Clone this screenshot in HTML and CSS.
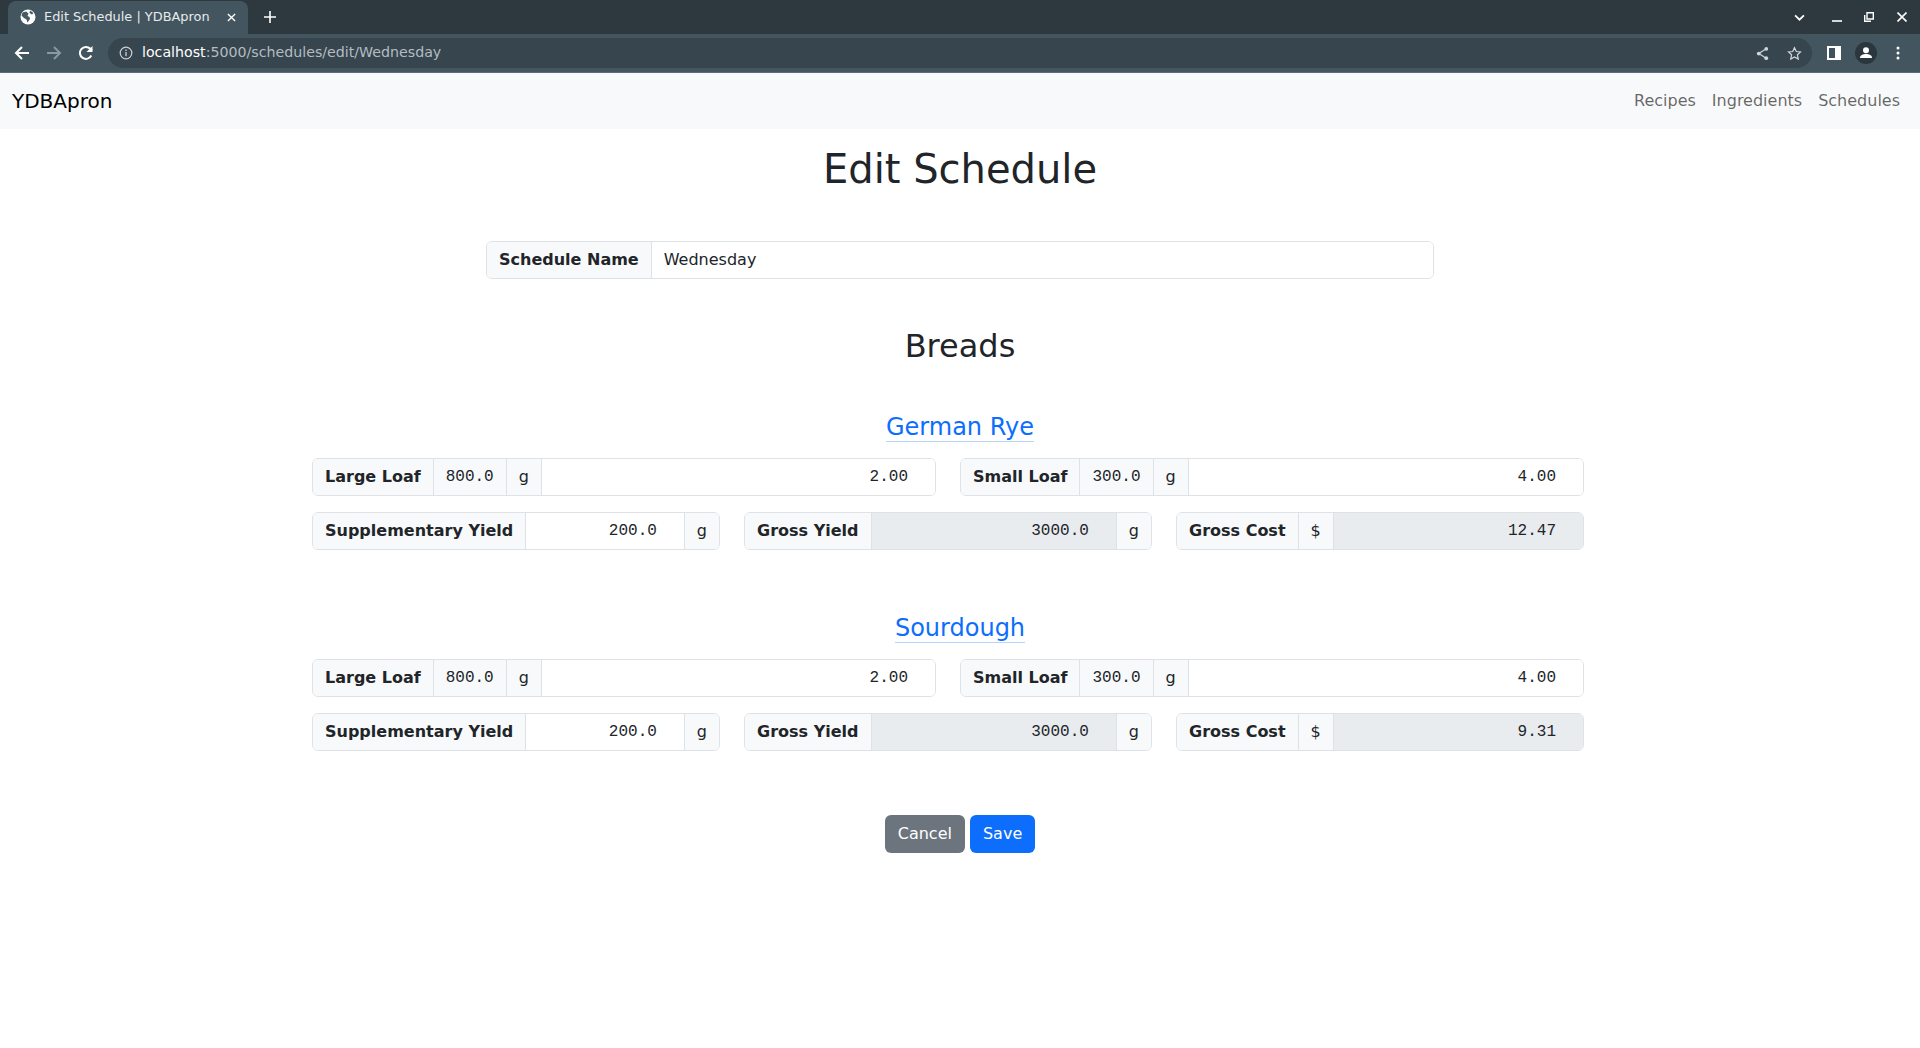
FILE: index.html
```html
<!DOCTYPE html>
<html lang="en">
<head>
  <meta charset="UTF-8">
  <title>Edit Schedule | YDBApron</title>
  <link rel="stylesheet" href="styles.css">
</head>
<body>

<!-- browser chrome -->
<div class="tabstrip">
  <div class="tab">
    <svg class="favicon" viewBox="0 0 16 16"><circle cx="8" cy="8" r="7.500" fill="#fff"/><path d="M2.500 3.500L6 2.500l2.500 2-1 2.500 2 1 .5 2-2.500 3.500-1-3-2.500-1.500-2.500-2.500zM10 1.500l3.500 2.500-1.500 1.500-2.500-1.500z" fill="#455a66"/></svg>
    <span class="tab-title">Edit Schedule | YDBApron</span>
    <svg class="tab-close" viewBox="0 0 10 10"><path d="M1 1l8 8M9 1l-8 8" stroke="#fff" stroke-width="1.500"/></svg>
  </div>
  <svg class="new-tab" viewBox="0 0 12 12"><path d="M6 0v12M0 6h12" stroke="#fff" stroke-width="1.600"/></svg>
  <div class="window-btns">
    <svg class="win-chevron" viewBox="0 0 10 6"><path d="M1 1l4 4 4-4" fill="none" stroke="#fff" stroke-width="1.600"/></svg>
    <svg class="win-icon" viewBox="0 0 10 10"><path d="M0 9h10" stroke="#fff" stroke-width="1.600"/></svg>
    <svg class="win-icon" viewBox="0 0 10 10"><path d="M3 .7h6.300v6.300H3z" fill="none" stroke="#fff" stroke-width="1.400"/><path d="M.7 3v6.300H7" fill="none" stroke="#fff" stroke-width="1.400"/></svg>
    <svg class="win-icon" viewBox="0 0 10 10"><path d="M.5.5l9 9M9.500.5l-9 9" stroke="#fff" stroke-width="1.600"/></svg>
  </div>
</div>
<div class="toolbar">
  <svg class="tool-icon" viewBox="0 0 16 16"><path d="M15 8H2M8 2L2 8l6 6" fill="none" stroke="#fff" stroke-width="2"/></svg>
  <svg class="tool-icon" viewBox="0 0 16 16"><path d="M1 8h13M8 2l6 6-6 6" fill="none" stroke="#8b989f" stroke-width="2"/></svg>
  <svg class="tool-icon" viewBox="0 0 16 16"><path d="M13.300 10.500A6 6 0 1 1 12.300 3.800L14 5.500" fill="none" stroke="#fff" stroke-width="2"/><path d="M14.500 1v6h-6z" fill="#fff"/></svg>
  <div class="omnibox">
    <svg class="info-icon" viewBox="0 0 14 14"><circle cx="7" cy="7" r="5.800" fill="none" stroke="#ccd2d6" stroke-width="1.200"/><path d="M7 6v4.200M7 3.600v1.400" stroke="#ccd2d6" stroke-width="1.300"/></svg>
    <span class="url"><span class="url-host">localhost</span>:5000/schedules/edit/Wednesday</span>
    <svg class="omni-icon" viewBox="0 0 16 16"><path d="M12 3L4 8l8 5" fill="none" stroke="#cfd5d9" stroke-width="1.300"/><circle cx="12" cy="3" r="2" fill="#cfd5d9"/><circle cx="4" cy="8" r="2" fill="#cfd5d9"/><circle cx="12" cy="13" r="2" fill="#cfd5d9"/></svg>
    <svg class="omni-icon" viewBox="0 0 16 16"><path d="M8 1.800l1.900 4.100 4.500.5-3.300 3 .9 4.500L8 11.700l-4 2.200.9-4.500-3.300-3 4.500-.5z" fill="none" stroke="#cfd5d9" stroke-width="1.300"/></svg>
  </div>
  <svg class="tool-side" viewBox="0 0 14 14"><path d="M0 0h14v14H0z" fill="#fff"/><path d="M2 2h6v10H2z" fill="#3f525d"/></svg>
  <svg class="tool-avatar" viewBox="0 0 22 22"><circle cx="11" cy="11" r="11" fill="#2b373e"/><circle cx="11" cy="8.200" r="3" fill="#fff"/><path d="M5 16c0-3 3-4 6-4s6 1 6 4z" fill="#fff"/></svg>
  <svg class="tool-menu" viewBox="0 0 4 14"><circle cx="2" cy="2" r="1.500" fill="#fff"/><circle cx="2" cy="7" r="1.500" fill="#fff"/><circle cx="2" cy="12" r="1.500" fill="#fff"/></svg>
</div>

<nav class="navbar">
  <a class="brand" href="#">YDBApron</a>
  <div class="nav-links">
    <a href="#">Recipes</a>
    <a href="#">Ingredients</a>
    <a href="#">Schedules</a>
  </div>
</nav>

<main class="container">
  <h1>Edit Schedule</h1>

  <div class="input-group name-group">
    <span class="addon label">Schedule Name</span>
    <span class="field field-text">Wednesday</span>
  </div>

  <h2>Breads</h2>

  <section class="bread">
    <h3><a href="#">German Rye</a></h3>
    <div class="row">
      <div class="input-group half">
        <span class="addon label">Large Loaf</span>
        <span class="addon mono">800.0</span>
        <span class="addon">g</span>
        <span class="field mono">2.00</span>
      </div>
      <div class="input-group half">
        <span class="addon label">Small Loaf</span>
        <span class="addon mono">300.0</span>
        <span class="addon">g</span>
        <span class="field mono">4.00</span>
      </div>
    </div>
    <div class="row">
      <div class="input-group third">
        <span class="addon label">Supplementary Yield</span>
        <span class="field mono">200.0</span>
        <span class="addon">g</span>
      </div>
      <div class="input-group third">
        <span class="addon label">Gross Yield</span>
        <span class="field mono readonly">3000.0</span>
        <span class="addon">g</span>
      </div>
      <div class="input-group third">
        <span class="addon label">Gross Cost</span>
        <span class="addon">$</span>
        <span class="field mono readonly">12.47</span>
      </div>
    </div>
  </section>

  <section class="bread">
    <h3><a href="#">Sourdough</a></h3>
    <div class="row">
      <div class="input-group half">
        <span class="addon label">Large Loaf</span>
        <span class="addon mono">800.0</span>
        <span class="addon">g</span>
        <span class="field mono">2.00</span>
      </div>
      <div class="input-group half">
        <span class="addon label">Small Loaf</span>
        <span class="addon mono">300.0</span>
        <span class="addon">g</span>
        <span class="field mono">4.00</span>
      </div>
    </div>
    <div class="row">
      <div class="input-group third">
        <span class="addon label">Supplementary Yield</span>
        <span class="field mono">200.0</span>
        <span class="addon">g</span>
      </div>
      <div class="input-group third">
        <span class="addon label">Gross Yield</span>
        <span class="field mono readonly">3000.0</span>
        <span class="addon">g</span>
      </div>
      <div class="input-group third">
        <span class="addon label">Gross Cost</span>
        <span class="addon">$</span>
        <span class="field mono readonly">9.31</span>
      </div>
    </div>
  </section>

  <div class="actions">
    <button class="btn btn-cancel">Cancel</button>
    <button class="btn btn-save">Save</button>
  </div>
</main>

</body>
</html>
```

FILE: styles.css
```css
* {
  box-sizing: border-box;
}
body {
  margin: 0;
  height: 1048px;
  overflow: hidden;
  font-family: "DejaVu Sans", sans-serif;
  font-size: 16px;
  line-height: 1.5;
  color: #212529;
  background: #fff;
}

/* browser chrome */
.tabstrip {
  height: 34px;
  background: #2d383f;
  display: flex;
  align-items: flex-end;
  padding-left: 8px;
}
.tab {
  width: 240px;
  height: 33px;
  background: #43565f;
  border-radius: 8px 8px 0 0;
  display: flex;
  align-items: center;
  padding: 0 12px 1px;
  color: #fff;
  font-size: 12.900px;
}
.favicon {
  width: 16px;
  height: 16px;
}
.tab-title {
  margin-left: 8px;
  flex: 1;
  color: #e8eaed;
}
.tab-close {
  width: 9px;
  height: 9px;
}
.new-tab {
  width: 12px;
  height: 12px;
  margin: 0 0 11px 16px;
}
.window-btns {
  margin-left: auto;
  height: 34px;
  display: flex;
  align-items: center;
  gap: 22px;
  padding-right: 13px;
}
.win-chevron {
  width: 11px;
  height: 7px;
  margin-right: 5px;
}
.win-icon {
  width: 10px;
  height: 10px;
}
.win-icon:last-child {
  margin-left: 1px;
}
.toolbar {
  height: 39px;
  background: #43565f;
  border-bottom: 1px solid #5a6b75;
  display: flex;
  align-items: center;
  padding-left: 14px;
}
.tool-icon {
  width: 16px;
  height: 16px;
  margin-right: 16px;
}
.omnibox {
  width: 1704px;
  height: 30px;
  margin-left: -2px;
  background: #36454e;
  border-radius: 15px;
  display: flex;
  align-items: center;
  padding: 0 10px 0 11px;
}
.info-icon {
  width: 14px;
  height: 14px;
}
.url {
  margin-left: 9px;
  flex: 1;
  font-size: 14.200px;
  color: #b4bcc1;
}
.url-host {
  color: #fff;
}
.omni-icon {
  width: 15px;
  height: 15px;
  margin-left: 17px;
}
.tool-side {
  width: 14px;
  height: 14px;
  margin-left: 15px;
}
.tool-avatar {
  width: 22px;
  height: 22px;
  margin-left: 14px;
}
.tool-menu {
  width: 4px;
  height: 14px;
  margin-left: 19px;
}

/* navbar */
.navbar {
  height: 56px;
  background: #f8f9fa;
  display: flex;
  align-items: center;
  justify-content: space-between;
  padding: 0 20px 0 12px;
}
.brand {
  font-size: 20px;
  color: #000;
  text-decoration: none;
}
.nav-links {
  display: flex;
  gap: 16px;
}
.nav-links a {
  color: #00000099;
  text-decoration: none;
}

/* page */
.container {
  width: 1320px;
  margin: 0 auto;
  padding: 0 12px;
}
h1, h2, h3 {
  font-weight: 500;
  line-height: 1.2;
  text-align: center;
  margin: 0;
}
h1 {
  font-size: 40px;
  padding-top: 16px;
  margin-bottom: 48px;
}
h2 {
  font-size: 32px;
  margin-top: 48px;
  margin-bottom: 48px;
}
h3 {
  font-size: 24px;
  margin-bottom: 16px;
}
h3 a {
  color: #0d6efd;
  text-decoration: none;
  border-bottom: 1px solid #b6d4fe;
}
.bread {
  margin-bottom: 64px;
}
.row {
  display: flex;
  gap: 24px;
  margin-bottom: 16px;
}
.input-group {
  display: flex;
  height: 38px;
  border: 1px solid #dee2e6;
  border-radius: 6px;
  overflow: hidden;
}
.name-group {
  width: 948px;
  margin: 0 auto;
}
.half {
  width: 624px;
}
.third {
  width: 408px;
}
.addon {
  display: flex;
  align-items: center;
  padding: 0 12px;
  background: #f8f9fa;
  border-right: 1px solid #dee2e6;
  white-space: nowrap;
}
.addon:last-child {
  border-right: 0;
}
.label {
  font-weight: 700;
}
.field {
  flex: 1;
  display: flex;
  align-items: center;
  justify-content: flex-end;
  padding: 0 27px 0 12px;
  background: #fff;
  border-right: 1px solid #dee2e6;
}
.field:last-child {
  border-right: 0;
}
.field-text {
  justify-content: flex-start;
}
.mono {
  font-family: "Liberation Mono", monospace;
}
.readonly {
  background: #e9ecef;
}
.actions {
  display: flex;
  justify-content: center;
  gap: 5px;
}
.btn {
  font-family: inherit;
  font-size: 16px;
  height: 38px;
  padding: 0 12px;
  border: 1px solid transparent;
  border-radius: 6px;
  color: #fff;
}
.btn-cancel {
  background: #6c757d;
}
.btn-save {
  background: #0d6efd;
}
```
